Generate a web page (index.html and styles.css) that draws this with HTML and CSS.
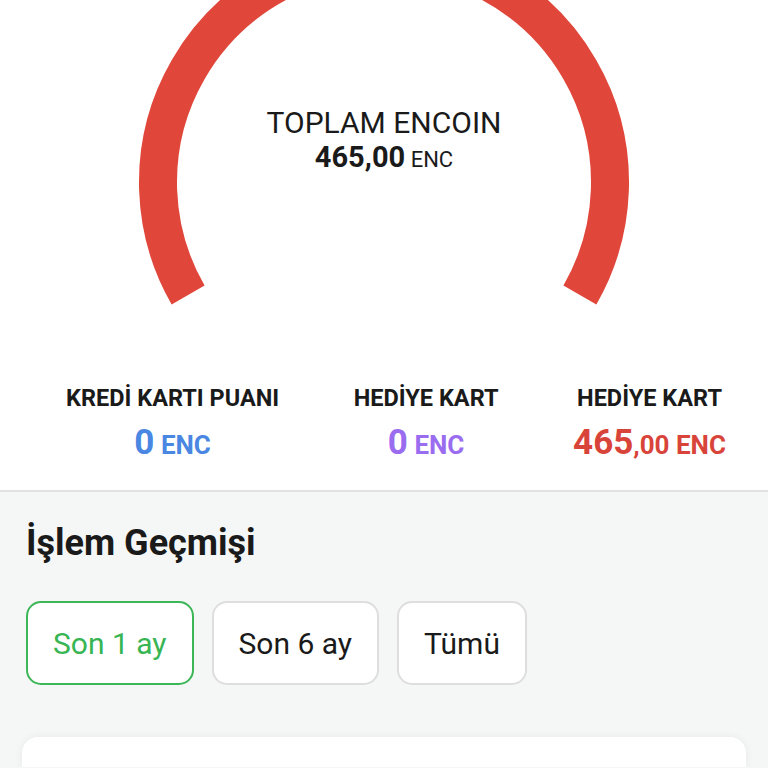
FILE: index.html
```html
<!DOCTYPE html>
<html lang="tr">
<head>
    <meta charset="UTF-8">
    <meta name="viewport" content="width=device-width, initial-scale=1.0">
    <title>Encoin</title>
    <link rel="stylesheet" href="styles.css">
</head>
<body>

<div class="summary">
    <div class="gauge">
        <svg class="gauge-arc" width="768" height="340" viewBox="0 0 768 340">
            <!-- 240 derecelik yay, merkez 384,182 -->
            <path d="M 188.1 295 A 226 226 0 1 1 579.9 295" fill="none" stroke="#e0473a" stroke-width="38"/>
        </svg>
        <div class="gauge-text">
            <div class="gauge-title">TOPLAM ENCOIN</div>
            <div class="gauge-total"><b>465,00</b> ENC</div>
        </div>
    </div>

    <div class="stats">
        <div class="stat">
            <div class="stat-label">KREDİ KARTI PUANI</div>
            <div class="stat-value blue"><span class="big">0</span> ENC</div>
        </div>
        <div class="stat">
            <div class="stat-label">HEDİYE KART</div>
            <div class="stat-value purple"><span class="big">0</span> ENC</div>
        </div>
        <div class="stat">
            <div class="stat-label">HEDİYE KART</div>
            <div class="stat-value red"><span class="big">465</span>,00 ENC</div>
        </div>
    </div>
</div>

<div class="history">
    <h2 class="history-title">İşlem Geçmişi</h2>
    <div class="filters">
        <button class="filter active">Son 1 ay</button>
        <button class="filter">Son 6 ay</button>
        <button class="filter">Tümü</button>
    </div>
    <div class="card"></div>
</div>

</body>
</html>
```

FILE: styles.css
```css
body {
    margin: 0;
    font-family: Roboto, "Noto Sans", sans-serif;
    color: #1a1a1a;
    background-color: #f5f6f6;
}
.summary {
    background-color: #fff;
    border-bottom: 2px solid #e2e2e2;
}
.gauge {
    position: relative;
    height: 382px;
}
.gauge-arc {
    display: block;
}
.gauge-text {
    position: absolute;
    top: 105px;
    left: 0;
    right: 0;
    text-align: center;
}
.gauge-title {
    font-size: 30px;
    line-height: 35px;
}
.gauge-total {
    font-size: 22px;
    line-height: 35px;
}
.gauge-total b {
    font-size: 29px;
}
.stats {
    display: flex;
    justify-content: space-between;
    padding: 0 42px 16px 66px;
}
.stat {
    text-align: center;
}
.stat-label {
    font-size: 23.5px;
    font-weight: bold;
    line-height: 32px;
}
.stat-value {
    font-size: 26px;
    font-weight: bold;
    line-height: 58px;
}
.stat-value .big {
    font-size: 35px;
}
.blue {
    color: #4a87e2;
}
.purple {
    color: #9a6cef;
}
.red {
    color: #d9443a;
}
.history {
    padding: 29px 22px 0 26px;
}
.history-title {
    margin: 0 0 36px 0;
    font-size: 36px;
    font-weight: bold;
    line-height: 44px;
}
.filters {
    display: flex;
    gap: 18px;
}
.filter {
    height: 84px;
    padding: 0 25px;
    font-family: inherit;
    font-size: 30px;
    color: #1a1a1a;
    background-color: #fff;
    border: 2px solid #dedede;
    border-radius: 15px;
}
.filter.active {
    color: #38b553;
    border-color: #3cb656;
}
.card {
    margin: 52px 0 0 -4px;
    height: 30px;
    background-color: #fff;
    border-radius: 16px 16px 0 0;
    box-shadow: 0 0 8px rgba(0, 0, 0, 0.06);
}
```
